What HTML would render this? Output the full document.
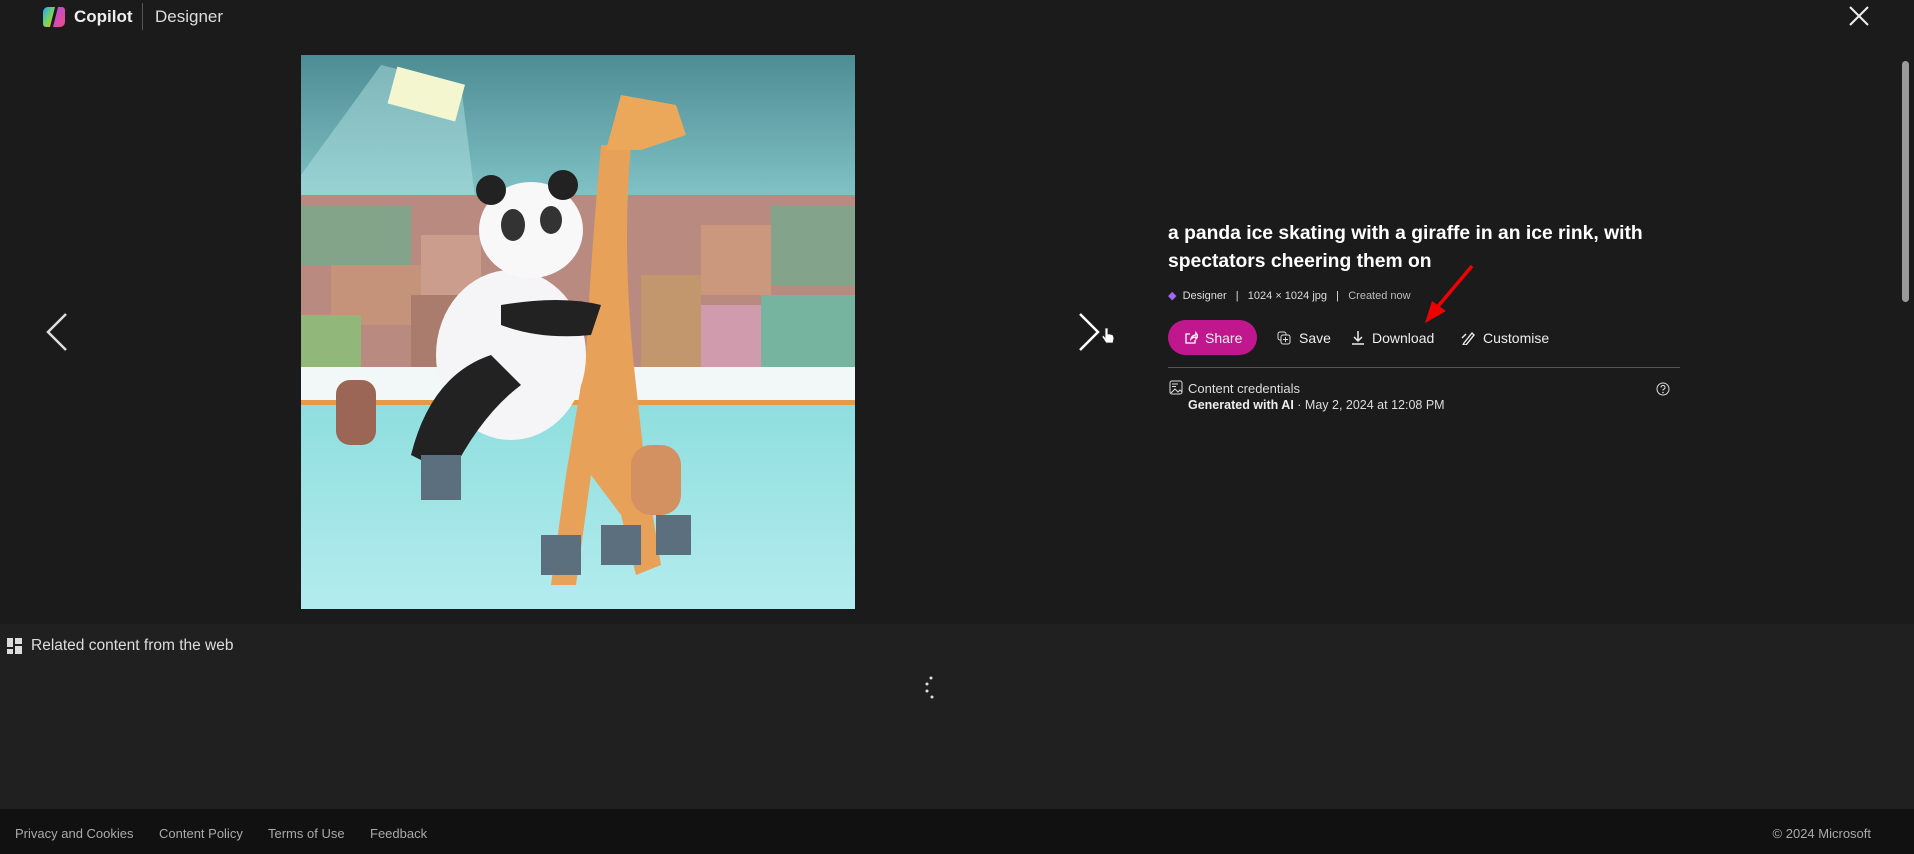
<!DOCTYPE html>
<html><head><meta charset="utf-8"><style>
*{margin:0;padding:0;box-sizing:border-box}
body{width:1914px;height:854px;background:#1b1b1b;font-family:"Liberation Sans",sans-serif;color:#fff;position:relative;overflow:hidden}
.a{position:absolute}
.btn{position:absolute;top:320px;height:35px;display:flex;align-items:center;font-size:14px;color:#eee}
.ft{position:absolute;top:826px;font-size:13px;color:#aaa}
</style></head><body>
<svg class="a" style="left:42px;top:6px" width="24" height="22" viewBox="0 0 24 22">
<defs><linearGradient id="g1" x1="0" y1="0" x2="1" y2="1"><stop offset="0" stop-color="#2aa4f4"/><stop offset=".5" stop-color="#6fd36a"/><stop offset="1" stop-color="#f5b400"/></linearGradient>
<linearGradient id="g2" x1="0" y1="0" x2="1" y2="1"><stop offset="0" stop-color="#b04cf0"/><stop offset="1" stop-color="#f24c7a"/></linearGradient></defs>
<path d="M6 1h7l-5 20H4a3 3 0 0 1-3-3V6a5 5 0 0 1 5-5z" fill="url(#g1)"/>
<path d="M18 21h-7l5-20h4a3 3 0 0 1 3 3v12a5 5 0 0 1-5 5z" fill="url(#g2)"/>
</svg>
<div class="a" style="left:74px;top:7px;font-size:17px;font-weight:bold;color:#eee">Copilot</div>
<div class="a" style="left:142px;top:3px;width:1px;height:27px;background:#555"></div>
<div class="a" style="left:155px;top:7px;font-size:17px;color:#ddd">Designer</div>
<svg class="a" style="left:1848px;top:5px" width="22" height="22" viewBox="0 0 22 22"><path d="M2 2L20 20M20 2L2 20" stroke="#eee" stroke-width="2"/></svg>
<div class="a" style="left:1902px;top:61px;width:7px;height:241px;border-radius:4px;background:#9a9a9a"></div>
<svg class="a" style="left:44px;top:312px" width="26" height="40" viewBox="0 0 26 40"><path d="M22 2L4 20L22 38" stroke="#ddd" stroke-width="2.5" fill="none"/></svg>
<svg class="a" style="left:1076px;top:312px" width="26" height="40" viewBox="0 0 26 40"><path d="M4 2L22 20L4 38" stroke="#fff" stroke-width="2.5" fill="none"/></svg>
<svg class="a" style="left:1101px;top:327px" width="14" height="18" viewBox="0 0 14 18"><path d="M4 1v9l-2-2-1 2 4 6h7l1-5-1-3-3-1-2 0V1z" fill="#fff" stroke="#222" stroke-width=".8"/></svg>
<svg class="a" style="left:301px;top:55px" width="554" height="554" viewBox="0 0 554 554">
<defs><linearGradient id="bg" x1="0" y1="0" x2="0" y2="1"><stop offset="0" stop-color="#4d8c94"/><stop offset=".25" stop-color="#7fc1c4"/><stop offset="1" stop-color="#9fd6d8"/></linearGradient>
<linearGradient id="ice" x1="0" y1="0" x2="0" y2="1"><stop offset="0" stop-color="#8fdede"/><stop offset="1" stop-color="#b3ecef"/></linearGradient></defs>
<rect width="554" height="554" fill="url(#bg)"/>
<polygon points="80,10 160,30 200,350 0,350 0,120" fill="#b7e6e4" opacity=".45"/>
<rect x="90" y="20" width="70" height="38" fill="#f4f6d0" transform="rotate(15 125 40)"/>
<rect x="0" y="140" width="554" height="175" fill="#b98a80"/>
<g opacity=".85">
<rect x="0" y="150" width="110" height="60" fill="#7aa88c"/><rect x="30" y="210" width="90" height="60" fill="#c6957a"/>
<rect x="0" y="260" width="60" height="55" fill="#8cc07a"/><rect x="110" y="240" width="60" height="75" fill="#a87a6a"/>
<rect x="120" y="180" width="60" height="60" fill="#cfa18f"/><rect x="400" y="170" width="70" height="70" fill="#cf9a7d"/>
<rect x="470" y="150" width="84" height="80" fill="#7aa88c"/><rect x="380" y="250" width="80" height="65" fill="#d39fb5"/>
<rect x="460" y="240" width="94" height="75" fill="#6cbca6"/><rect x="340" y="220" width="60" height="95" fill="#c49a6a"/>
</g>
<rect x="0" y="312" width="554" height="36" fill="#f2f7f8"/>
<rect x="0" y="345" width="554" height="5" fill="#e39b4a"/>
<rect x="0" y="350" width="554" height="204" fill="url(#ice)"/>
<path d="M300 90 Q290 200 285 300 L265 420 L250 530 L275 530 L290 420 L320 460 L335 520 L360 510 L345 420 L335 330 Q320 200 330 90Z" fill="#e8a158"/>
<path d="M305 95 L320 40 L375 50 L385 80 L340 95Z" fill="#eba85a"/>
<ellipse cx="210" cy="300" rx="75" ry="85" fill="#f5f5f7"/>
<ellipse cx="230" cy="175" rx="52" ry="48" fill="#f8f8f8"/>
<circle cx="190" cy="135" r="15" fill="#222"/><circle cx="262" cy="130" r="15" fill="#222"/>
<ellipse cx="212" cy="170" rx="12" ry="16" fill="#333"/><ellipse cx="250" cy="165" rx="11" ry="14" fill="#333"/>
<path d="M200 250 Q260 240 300 250 L290 280 Q240 285 200 270Z" fill="#222"/>
<path d="M110 400 Q130 320 190 300 L220 330 Q180 360 150 420Z" fill="#222"/>
<rect x="120" y="400" width="40" height="45" fill="#5b6f7e"/><rect x="240" y="480" width="40" height="40" fill="#5b6f7e"/>
<rect x="300" y="470" width="40" height="40" fill="#5b6f7e"/><rect x="355" y="460" width="35" height="40" fill="#5b6f7e"/>
<rect x="330" y="390" width="50" height="70" rx="20" fill="#d39060"/>
<rect x="35" y="325" width="40" height="65" rx="14" fill="#9b6656"/>
</svg>
<div class="a" style="left:1168px;top:220px;font-size:19.3px;font-weight:bold;line-height:28px;color:#fff;width:520px">a panda ice skating with a giraffe in an ice rink, with spectators cheering them on</div>
<div class="a" style="left:1168px;top:289px;font-size:11px;color:#ddd;white-space:pre"><span style="color:#a566f0">◆</span>  Designer   |   1024 × 1024 jpg   |   <span style="color:#bbb">Created now</span></div>
<div class="btn" style="left:1168px;width:89px;background:#c0178f;border-radius:18px;padding-left:16px"><svg width="14" height="13" viewBox="0 0 14 13" style="margin-right:7px"><path d="M6 3H2v9h9V9M7 8q1-4 5-4V2l2 3-2 3V6q-3 0-5 2z" stroke="#fff" fill="none" stroke-width="1.3"/></svg>Share</div>
<div class="btn" style="left:1277px"><svg width="14" height="14" viewBox="0 0 14 14" style="margin-right:8px"><rect x="1" y="1" width="8" height="8" rx="2" stroke="#ddd" fill="none"/><rect x="4" y="4" width="9" height="9" rx="2" stroke="#ddd" fill="#1b1b1b"/><path d="M8.5 6v5M6 8.5h5" stroke="#ddd"/></svg>Save</div>
<div class="btn" style="left:1351px"><svg width="14" height="15" viewBox="0 0 14 15" style="margin-right:7px"><path d="M7 1v10M3 7l4 4 4-4M1 14h12" stroke="#eee" stroke-width="1.5" fill="none"/></svg>Download</div>
<div class="btn" style="left:1461px"><svg width="14" height="14" viewBox="0 0 14 14" style="margin-right:8px"><path d="M3 12L11 2l2 2-8 10H2zM1 7l4-4" stroke="#eee" stroke-width="1.4" fill="none"/></svg>Customise</div>
<svg class="a" style="left:1420px;top:263px" width="55" height="62" viewBox="0 0 55 62"><path d="M52 3L14 48" stroke="#e00" stroke-width="3.5"/><path d="M5 60L12 38L26 48Z" fill="#e00"/></svg>
<div class="a" style="left:1168px;top:367px;width:512px;height:1px;background:#555"></div>
<svg class="a" style="left:1169px;top:380px" width="14" height="15" viewBox="0 0 14 15"><rect x="1" y="1" width="12" height="13" rx="2" stroke="#ddd" fill="none"/><path d="M3 4h6M3 6.5h4M2 13l4-4 3 3 2-2 2 2" stroke="#ddd" fill="none"/></svg>
<div class="a" style="left:1188px;top:381px;font-size:13px;color:#ddd">Content credentials</div>
<div class="a" style="left:1188px;top:398px;font-size:12.5px;color:#ddd"><b style="color:#eee">Generated with AI</b> · May 2, 2024 at 12:08 PM</div>
<svg class="a" style="left:1656px;top:382px" width="14" height="14" viewBox="0 0 14 14"><circle cx="7" cy="7" r="6" stroke="#ddd" fill="none"/><path d="M5 5.5q0-2 2-2t2 2q0 1.5-2 2v1" stroke="#ddd" fill="none"/><circle cx="7" cy="10.5" r=".8" fill="#ddd"/></svg>
<div class="a" style="left:0;top:624px;width:1914px;height:185px;background:#202020"></div>
<svg class="a" style="left:7px;top:638px" width="16" height="16" viewBox="0 0 16 16"><rect x="0" y="0" width="6" height="9" fill="#ddd"/><rect x="8" y="0" width="7" height="6" fill="#ddd"/><rect x="0" y="11" width="6" height="5" fill="#ddd"/><rect x="8" y="8" width="7" height="8" fill="#ddd"/></svg>
<div class="a" style="left:31px;top:637px;font-size:15.5px;color:#ddd">Related content from the web</div>
<svg class="a" style="left:924px;top:676px" width="14" height="24" viewBox="0 0 14 24"><circle cx="7" cy="2" r="1.5" fill="#ddd"/><circle cx="3" cy="8" r="1.5" fill="#ddd"/><circle cx="3" cy="15" r="1.5" fill="#ddd"/><circle cx="8" cy="21" r="1.5" fill="#ddd"/></svg>
<div class="a" style="left:0;top:809px;width:1914px;height:45px;background:#111"></div>
<div class="ft" style="left:15px">Privacy and Cookies</div>
<div class="ft" style="left:159px">Content Policy</div>
<div class="ft" style="left:268px">Terms of Use</div>
<div class="ft" style="left:370px">Feedback</div>
<div class="ft" style="right:43px">© 2024 Microsoft</div>
</body></html>
